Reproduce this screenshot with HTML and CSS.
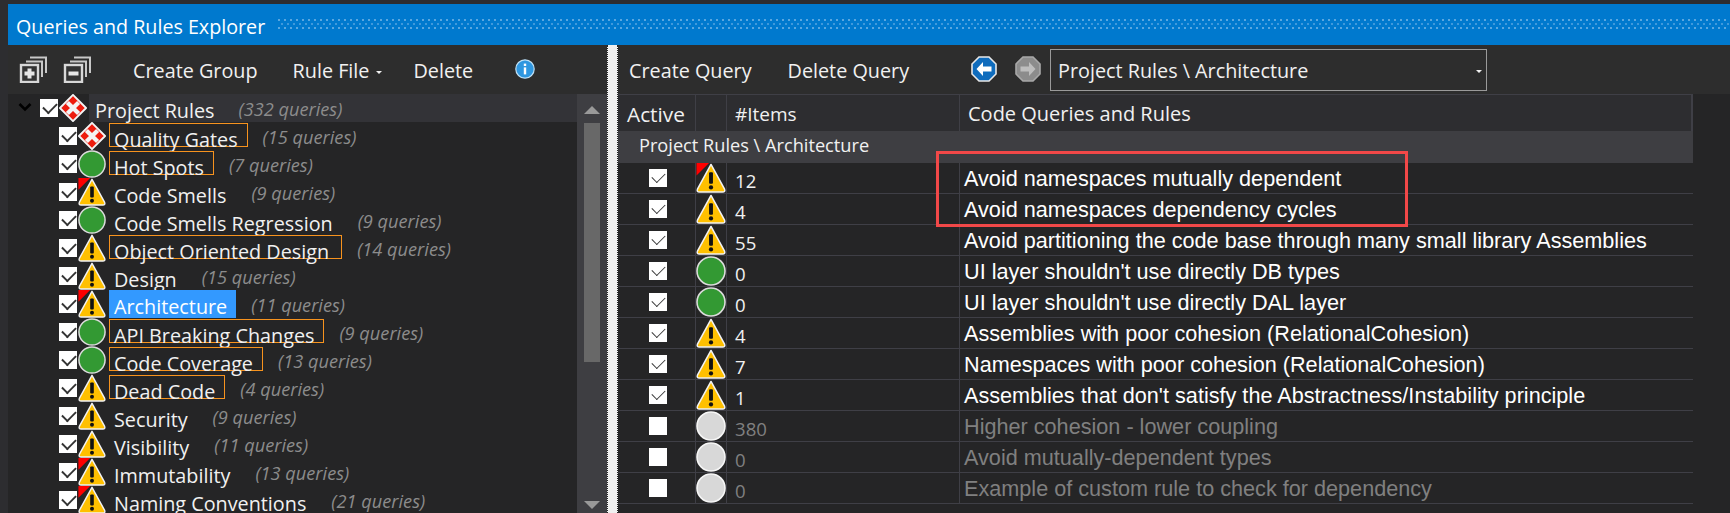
FILE: index.html
```html
<!DOCTYPE html>
<html lang="en">
<head>
    <meta charset="UTF-8">
    <title>Queries and Rules Explorer</title>
    <link rel="stylesheet" href="styles.css">
</head>
<body>
    <svg class="icon-defs" width="0" height="0">
        <defs>
            <symbol id="i-warn" viewBox="0 0 30 31">
                <path d="M15 1.5 L29 27 Q30 30 27 30 L3 30 Q0 30 1 27 Z" fill="#ffc000" stroke="#f2f2f2" stroke-width="1.6" stroke-linejoin="round"/>
                <rect x="13" y="9.5" width="4" height="12" rx="1" fill="#111"/>
                <circle cx="15" cy="25.3" r="2.2" fill="#111"/>
            </symbol>
            <symbol id="i-warn-flag" viewBox="0 0 30 31">
                <path d="M0 0 H13 L0 13 Z" fill="#ff0000"/>
                <path d="M15 1.5 L29 27 Q30 30 27 30 L3 30 Q0 30 1 27 Z" fill="#ffc000" stroke="#f2f2f2" stroke-width="1.6" stroke-linejoin="round"/>
                <rect x="13" y="9.5" width="4" height="12" rx="1" fill="#111"/>
                <circle cx="15" cy="25.3" r="2.2" fill="#111"/>
            </symbol>
            <symbol id="i-ok" viewBox="0 0 30 30">
                <circle cx="15" cy="15" r="14" fill="#339933" stroke="#dcdcdc" stroke-width="1.6"/>
            </symbol>
            <symbol id="i-off" viewBox="0 0 30 30">
                <circle cx="15" cy="15" r="14" fill="#d8d8d8" stroke="#f6f6f6" stroke-width="1.6"/>
            </symbol>
            <symbol id="i-crit" viewBox="0 0 30 30">
                <path d="M15 1 L29 15 L15 29 L1 15 Z" fill="#ee1c0e" stroke="#f4f4f4" stroke-width="2" stroke-linejoin="round"/>
                <path d="M9 9 L21 21 M21 9 L9 21" stroke="#f4f4f4" stroke-width="4.6"/>
            </symbol>
            <symbol id="i-pages" viewBox="0 0 28 27">
                <path d="M11 1.5 H27 V17 M7 5.5 H23 V21 " fill="none" stroke="#c8c8c8" stroke-width="2"/>
                <rect x="2" y="9" width="17" height="17" fill="#333" stroke="#d8d8d8" stroke-width="2.4"/>
            </symbol>
        </defs>
    </svg>

    <div class="window">
        <div class="titlebar">
            <span class="title">Queries and Rules Explorer</span>
            <span class="grip"></span>
        </div>

        <div class="panes">
            <div class="left">
                <div class="toolbar left-bar">
                    <svg class="stack" viewBox="0 0 28 27"><use href="#i-pages"/><path d="M5.5 15.5 H15.5 V19.5 H5.5 Z M8.5 12.5 H12.5 V22.5 H8.5 Z" fill="#e6e6e6"/></svg>
                    <svg class="stack" viewBox="0 0 28 27"><use href="#i-pages"/><path d="M5.5 15.5 H15.5 V19.5 H5.5 Z" fill="#e6e6e6"/></svg>
                    <span class="tool tool-group">Create Group</span>
                    <span class="tool tool-file">Rule File<i class="mini-arrow"></i></span>
                    <span class="tool tool-delete">Delete</span>
                    <svg class="info" viewBox="0 0 20 20">
                        <circle cx="10" cy="10" r="9.2" fill="#2f97e0" stroke="#bfe0f5" stroke-width="1.2"/>
                        <rect x="8.8" y="8.4" width="2.4" height="7" fill="#fff"/>
                        <rect x="8.8" y="4.6" width="2.4" height="2.4" fill="#fff"/>
                    </svg>
                </div>

                <div class="tree">
                    <div class="tree-list">
                        <div class="node root">
                            <svg class="chevron" viewBox="0 0 14 10"><path d="M1.5 2 L7 7.5 L12.5 2" fill="none" stroke="#000" stroke-width="2.6"/></svg>
                            <span class="check on"></span>
                            <svg class="node-icon"><use href="#i-crit"/></svg>
                            <div class="root-label"><span class="name">Project Rules</span><span class="count">(332 queries)</span></div>
                        </div>
                        <div class="node"><span class="check on"></span><svg class="node-icon"><use href="#i-crit"/></svg><span class="name boxed">Quality Gates</span><span class="count">(15 queries)</span></div>
                        <div class="node"><span class="check on"></span><svg class="node-icon"><use href="#i-ok"/></svg><span class="name boxed">Hot Spots</span><span class="count">(7 queries)</span></div>
                        <div class="node"><span class="check on"></span><svg class="node-icon"><use href="#i-warn-flag"/></svg><span class="name">Code Smells</span><span class="count">(9 queries)</span></div>
                        <div class="node"><span class="check on"></span><svg class="node-icon"><use href="#i-ok"/></svg><span class="name">Code Smells Regression</span><span class="count">(9 queries)</span></div>
                        <div class="node"><span class="check on"></span><svg class="node-icon"><use href="#i-warn"/></svg><span class="name boxed wide">Object Oriented Design</span><span class="count">(14 queries)</span></div>
                        <div class="node"><span class="check on"></span><svg class="node-icon"><use href="#i-warn"/></svg><span class="name">Design</span><span class="count">(15 queries)</span></div>
                        <div class="node"><span class="check on"></span><svg class="node-icon"><use href="#i-warn-flag"/></svg><span class="name selected">Architecture</span><span class="count">(11 queries)</span></div>
                        <div class="node"><span class="check on"></span><svg class="node-icon"><use href="#i-ok"/></svg><span class="name boxed">API Breaking Changes</span><span class="count">(9 queries)</span></div>
                        <div class="node"><span class="check on"></span><svg class="node-icon"><use href="#i-ok"/></svg><span class="name boxed">Code Coverage</span><span class="count">(13 queries)</span></div>
                        <div class="node"><span class="check on"></span><svg class="node-icon"><use href="#i-warn"/></svg><span class="name boxed">Dead Code</span><span class="count">(4 queries)</span></div>
                        <div class="node"><span class="check on"></span><svg class="node-icon"><use href="#i-warn"/></svg><span class="name">Security</span><span class="count">(9 queries)</span></div>
                        <div class="node"><span class="check on"></span><svg class="node-icon"><use href="#i-warn"/></svg><span class="name">Visibility</span><span class="count">(11 queries)</span></div>
                        <div class="node"><span class="check on"></span><svg class="node-icon"><use href="#i-warn-flag"/></svg><span class="name">Immutability</span><span class="count">(13 queries)</span></div>
                        <div class="node"><span class="check on"></span><svg class="node-icon"><use href="#i-warn-flag"/></svg><span class="name">Naming Conventions</span><span class="count">(21 queries)</span></div>
                    </div>
                    <div class="scrollbar">
                        <i class="scroll-up"></i>
                        <div class="thumb"></div>
                        <i class="scroll-down"></i>
                    </div>
                </div>
            </div>

            <div class="splitter"></div>

            <div class="right">
                <div class="toolbar right-bar">
                    <span class="tool tool-create">Create Query</span>
                    <span class="tool tool-remove">Delete Query</span>
                    <svg class="nav nav-back" viewBox="0 0 26 26">
                        <path d="M8 1 H18 L25 8 V18 L18 25 H8 L1 18 V8 Z" fill="#0f6cbd" stroke="#e8e8e8" stroke-width="1.6"/>
                        <path d="M12 6 L5.5 13 L12 20 V15.5 H20.5 V10.5 H12 Z" fill="#fff"/>
                    </svg>
                    <svg class="nav nav-fwd" viewBox="0 0 26 26">
                        <path d="M8 1 H18 L25 8 V18 L18 25 H8 L1 18 V8 Z" fill="#8c8c8c" stroke="#a8a8a8" stroke-width="1.6"/>
                        <path d="M14 6 L20.5 13 L14 20 V15.5 H5.5 V10.5 H14 Z" fill="#bdbdbd"/>
                    </svg>
                    <div class="combo"><span class="combo-text">Project Rules \ Architecture</span><i class="mini-arrow"></i></div>
                </div>

                <div class="grid">
                    <div class="grid-head">
                        <div class="col-active">Active</div>
                        <div class="col-icon"></div>
                        <div class="col-items">#Items</div>
                        <div class="col-rule head-rule">Code Queries and Rules</div>
                    </div>
                    <div class="grid-group">Project Rules \ Architecture</div>

                    <div class="grid-row"><div class="col-active"><span class="check on"></span></div><div class="col-icon"><svg class="rule-icon"><use href="#i-warn-flag"/></svg></div><div class="col-items">12</div><div class="col-rule">Avoid namespaces mutually dependent</div></div>
                    <div class="grid-row"><div class="col-active"><span class="check on"></span></div><div class="col-icon"><svg class="rule-icon"><use href="#i-warn"/></svg></div><div class="col-items">4</div><div class="col-rule">Avoid namespaces dependency cycles</div></div>
                    <div class="grid-row"><div class="col-active"><span class="check on"></span></div><div class="col-icon"><svg class="rule-icon"><use href="#i-warn"/></svg></div><div class="col-items">55</div><div class="col-rule">Avoid partitioning the code base through many small library Assemblies</div></div>
                    <div class="grid-row"><div class="col-active"><span class="check on"></span></div><div class="col-icon"><svg class="rule-icon"><use href="#i-ok"/></svg></div><div class="col-items">0</div><div class="col-rule">UI layer shouldn't use directly DB types</div></div>
                    <div class="grid-row"><div class="col-active"><span class="check on"></span></div><div class="col-icon"><svg class="rule-icon"><use href="#i-ok"/></svg></div><div class="col-items">0</div><div class="col-rule">UI layer shouldn't use directly DAL layer</div></div>
                    <div class="grid-row"><div class="col-active"><span class="check on"></span></div><div class="col-icon"><svg class="rule-icon"><use href="#i-warn"/></svg></div><div class="col-items">4</div><div class="col-rule">Assemblies with poor cohesion (RelationalCohesion)</div></div>
                    <div class="grid-row"><div class="col-active"><span class="check on"></span></div><div class="col-icon"><svg class="rule-icon"><use href="#i-warn"/></svg></div><div class="col-items">7</div><div class="col-rule">Namespaces with poor cohesion (RelationalCohesion)</div></div>
                    <div class="grid-row"><div class="col-active"><span class="check on"></span></div><div class="col-icon"><svg class="rule-icon"><use href="#i-warn"/></svg></div><div class="col-items">1</div><div class="col-rule">Assemblies that don't satisfy the Abstractness/Instability principle</div></div>
                    <div class="grid-row off"><div class="col-active"><span class="check"></span></div><div class="col-icon"><svg class="rule-icon"><use href="#i-off"/></svg></div><div class="col-items">380</div><div class="col-rule">Higher cohesion - lower coupling</div></div>
                    <div class="grid-row off"><div class="col-active"><span class="check"></span></div><div class="col-icon"><svg class="rule-icon"><use href="#i-off"/></svg></div><div class="col-items">0</div><div class="col-rule">Avoid mutually-dependent types</div></div>
                    <div class="grid-row off"><div class="col-active"><span class="check"></span></div><div class="col-icon"><svg class="rule-icon"><use href="#i-off"/></svg></div><div class="col-items">0</div><div class="col-rule">Example of custom rule to check for dependency</div></div>

                    <div class="callout"></div>
                </div>
            </div>
        </div>
    </div>
</body>
</html>
```

FILE: styles.css
```css
* {
    box-sizing: border-box;
}
html, body {
    margin: 0;
    height: 100%;
    overflow: hidden;
    background-color: #2d2d30;
}
body {
    font-family: "Open Sans", "Noto Sans", sans-serif;
    font-size: 19.8px;
    color: #f1f1f1;
}
.icon-defs {
    position: absolute;
}
.window {
    height: 513px;
    padding: 4px 0 0 8px;
    display: flex;
    flex-direction: column;
}

/* title bar */
.titlebar {
    height: 41px;
    flex: none;
    background-color: #0079ce;
    display: flex;
    align-items: center;
    padding-left: 8px;
    color: #fff;
    font-size: 19.7px;
}
.title {
    white-space: nowrap;
    margin-top: 3px;
}
.grip {
    flex: 1;
    height: 12px;
    margin-left: 13px;
    background-image:
        radial-gradient(circle at 1px 1px, #5aa7e0 1px, transparent 1px),
        radial-gradient(circle at 1px 1px, #3f99dc 1px, transparent 1px);
    background-size: 6px 8px;
    background-position: 0 0, 3px 4px;
}

.panes {
    flex: 1;
    min-height: 0;
    display: flex;
}
.toolbar {
    height: 49px;
    flex: none;
    background-color: #2d2d2d;
    display: flex;
    align-items: center;
    white-space: nowrap;
}
.tool {
    margin-top: 1px;
}
.mini-arrow {
    display: inline-block;
    width: 0;
    height: 0;
    border-left: 3px solid transparent;
    border-right: 3px solid transparent;
    border-top: 3px solid #f1f1f1;
}

/* left pane */
.left {
    width: 599px;
    flex: none;
    display: flex;
    flex-direction: column;
}
.stack {
    width: 28px;
    height: 27px;
    flex: none;
}
.left-bar {
    padding-left: 11px;
    gap: 16px;
}
.tool-group {
    margin-left: 26px;
}
.tool-file {
    margin-left: 19px;
}
.tool-file .mini-arrow {
    margin-left: 7px;
    vertical-align: middle;
}
.tool-delete {
    margin-left: 15px;
}
.info {
    width: 20px;
    height: 20px;
    margin-left: 26px;
    margin-top: -2px;
}
.tree {
    flex: 1;
    min-height: 0;
    display: flex;
    background-color: #252526;
}
.tree-list {
    flex: 1;
    min-width: 0;
    overflow: hidden;
}
.node {
    height: 28px;
    display: flex;
    align-items: flex-start;
    padding-left: 51px;
    white-space: nowrap;
}
.root {
    padding-left: 10px;
}
.chevron {
    width: 14px;
    height: 10px;
    margin-top: 8px;
    margin-right: 8px;
    flex: none;
}
.check {
    width: 18px;
    height: 18px;
    flex: none;
    background-color: #fff;
    display: block;
    position: relative;
}
.node .check {
    margin-top: 5px;
}
.check.on::after {
    content: "";
    position: absolute;
    left: 3px;
    top: 3px;
    width: 12px;
    height: 7px;
    border-left: 1.6px solid #333;
    border-bottom: 1.6px solid #333;
    transform: rotate(-45deg) scale(0.95);
}
.node .check.on::after {
    border-left-width: 2px;
    border-bottom-width: 2px;
}
.node-icon {
    width: 28px;
    height: 28px;
    flex: none;
    margin-left: 1px;
    overflow: visible;
}
.root-label {
    flex: 1;
    height: 28px;
    margin-left: 2px;
    padding-left: 6px;
    background-color: #333337;
    display: flex;
    align-items: flex-start;
}
.name {
    height: 24px;
    margin: 1px 0 0 3px;
    padding: 0 9px 0 4px;
    line-height: 32px;
    border: 1px solid transparent;
}
.root-label .name {
    margin: 1px 0 0 0;
    padding: 0;
    border: 0;
}
.boxed {
    border-color: #f7931e;
}
.wide {
    padding-right: 12px;
}
.selected {
    height: 28px;
    margin-top: 0;
    border: 0;
    padding-left: 5px;
    padding-right: 9px;
    background-color: #3399ff;
    color: #fff;
    line-height: 33px;
}
.count {
    margin-left: 15px;
    font-style: italic;
    font-size: 18.2px;
    line-height: 30px;
    color: #8c8c8c;
}
.root-label .count {
    margin-left: 24px;
}

/* tree scrollbar */
.scrollbar {
    width: 30px;
    flex: none;
    background-color: #3e3e42;
    display: flex;
    flex-direction: column;
    align-items: center;
    padding: 12px 0 4px;
}
.thumb {
    width: 16px;
    height: 239px;
    margin-top: 9px;
    margin-bottom: auto;
    background-color: #686868;
}
.scroll-up {
    width: 0;
    height: 0;
    border-left: 8px solid transparent;
    border-right: 8px solid transparent;
    border-bottom: 8px solid #999;
}
.scroll-down {
    width: 0;
    height: 0;
    border-left: 8px solid transparent;
    border-right: 8px solid transparent;
    border-top: 8px solid #999;
}

.splitter {
    width: 11px;
    flex: none;
    background-color: #f0f0f0;
    border-left: 1px dotted #222;
    border-right: 1px dotted #222;
}

/* right pane */
.right {
    flex: 1;
    min-width: 0;
    display: flex;
    flex-direction: column;
    background-color: #252526;
}
.right-bar {
    padding-left: 11px;
}
.tool-remove {
    margin-left: 36px;
}
.nav {
    width: 26px;
    height: 26px;
    flex: none;
    margin-top: -2px;
}
.nav-back {
    margin-left: 62px;
}
.nav-fwd {
    margin-left: 18px;
}
.combo {
    width: 437px;
    height: 42px;
    margin-left: 9px;
    padding-left: 7px;
    border: 1px solid #9a9a9a;
    display: flex;
    align-items: center;
    position: relative;
}
.combo-text {
    margin-top: 2px;
}
.combo .mini-arrow {
    position: absolute;
    right: 4px;
    top: 20px;
}
.grid {
    width: 1075px;
    position: relative;
}
.grid-head {
    height: 37px;
    display: flex;
    align-items: stretch;
    background-color: #2d2d30;
    border-top: 1px solid #3f3f46;
    border-right: 1px solid #3f3f46;
}
.grid-head > div {
    display: flex;
    align-items: center;
    padding-top: 2px;
    border-right: 1px solid #3f3f46;
}
.grid-head .col-active {
    font-size: 20.8px;
}
.grid-head .col-items {
    font-size: 19px;
}
.grid-group {
    height: 32px;
    padding-left: 21px;
    background-color: #3e3e42;
    line-height: 29px;
    font-size: 18.2px;
}
.grid-row {
    height: 31px;
    display: flex;
    align-items: stretch;
    border-bottom: 1px solid #3f3f46;
}
.grid-row > div {
    border-right: 1px solid #3f3f46;
}
.col-active {
    width: 78px;
    flex: none;
    padding-left: 9px;
}
.grid-row .col-active {
    padding-left: 31px;
    padding-top: 6px;
}
.col-icon {
    width: 31px;
    flex: none;
}
.col-items {
    width: 233px;
    flex: none;
    padding-left: 8px;
    line-height: 35px;
    font-size: 18.6px;
}
.col-rule {
    flex: 1;
    padding-left: 4px;
    line-height: 32px;
    white-space: nowrap;
    color: #fff;
    font-family: "Liberation Sans", Arial, sans-serif;
    font-size: 21.65px;
}
.grid-row > .col-rule {
    border-right: 0;
}
.head-rule {
    padding-left: 8px;
    color: #f1f1f1;
    font-family: "Open Sans", "Noto Sans", sans-serif;
    font-size: 20px;
}
.rule-icon {
    width: 30px;
    height: 30px;
    display: block;
    overflow: visible;
}
.off .col-items, .off .col-rule {
    color: #808080;
}
.callout {
    position: absolute;
    left: 318px;
    top: 57px;
    width: 472px;
    height: 76px;
    border: 3px solid #f24848;
}
```
